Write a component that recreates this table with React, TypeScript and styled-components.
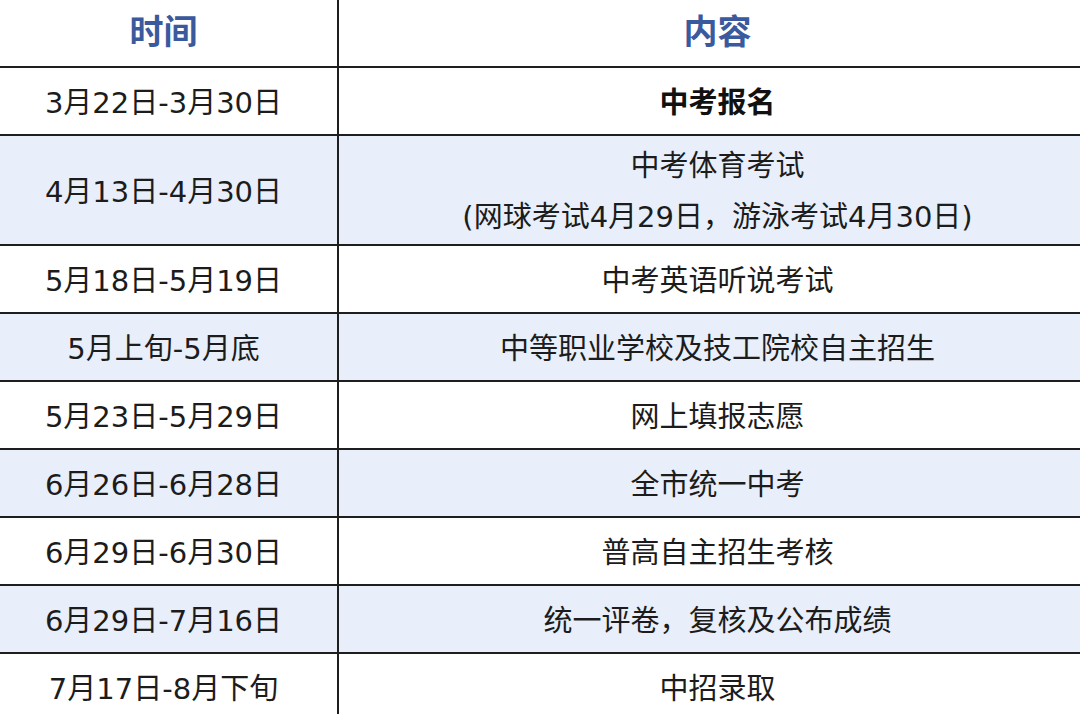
import styled, { createGlobalStyle } from "styled-components";

const GlobalStyle = createGlobalStyle`
    html, body {
        margin: 0;
        padding: 0;
        background: #ffffff;
        overflow: hidden;
    }
    body {
        font-family: "Noto Sans CJK SC", "Noto Sans", sans-serif;
        color: #1c1c1c;
    }
`

type Item = {
    time: string
    content: string[]
    bold?: boolean
}

const items: Item[] = [
    { time: "3月22日-3月30日", content: ["中考报名"], bold: true },
    { time: "4月13日-4月30日", content: ["中考体育考试", "(网球考试4月29日，游泳考试4月30日)"] },
    { time: "5月18日-5月19日", content: ["中考英语听说考试"] },
    { time: "5月上旬-5月底", content: ["中等职业学校及技工院校自主招生"] },
    { time: "5月23日-5月29日", content: ["网上填报志愿"] },
    { time: "6月26日-6月28日", content: ["全市统一中考"] },
    { time: "6月29日-6月30日", content: ["普高自主招生考核"] },
    { time: "6月29日-7月16日", content: ["统一评卷，复核及公布成绩"] },
    { time: "7月17日-8月下旬", content: ["中招录取"] },
]

export default function App() {
    return (
        <>
            <GlobalStyle />
            <Table>
                <Row height={66}>
                    <TimeCell><HeadText>时间</HeadText></TimeCell>
                    <ContentCell><HeadText>内容</HeadText></ContentCell>
                </Row>
                {items.map((item, i) => (
                    <Row
                        key={item.time}
                        height={item.content.length > 1 ? 108 : 66}
                        striped={i % 2 === 1}
                    >
                        <TimeCell><CellText>{item.time}</CellText></TimeCell>
                        <ContentCell>
                            {item.content.map(line => (
                                <CellText key={line} bold={item.bold} tall={item.content.length > 1}>
                                    {line}
                                </CellText>
                            ))}
                        </ContentCell>
                    </Row>
                ))}
            </Table>
        </>
    );
}

const Table = styled.div`
    width: 1106px;
    margin-left: -10px;
    display: flex;
    flex-direction: column;
`

type RowProps = {
    height: number
    striped?: boolean
}

const Row = styled.div<RowProps>`
    display: flex;
    height: ${props => props.height}px;
    border-bottom: 2px solid #1e1e1e;
    background: ${props => props.striped ? "#e8effb" : "#ffffff"};
    flex-shrink: 0;
`

const TimeCell = styled.div`
    width: 347px;
    border-right: 2px solid #1e1e1e;
    display: flex;
    flex-direction: column;
    align-items: center;
    justify-content: center;
    padding-top: 3px;
`

const ContentCell = styled.div`
    flex: 1;
    display: flex;
    flex-direction: column;
    align-items: center;
    justify-content: center;
    padding-top: 3px;
`

const HeadText = styled.span`
    font-size: 34px;
    font-weight: 700;
    color: #3a5a9d;
    margin-top: -10px;
`

type CellTextProps = {
    bold?: boolean
    tall?: boolean
}

const CellText = styled.span<CellTextProps>`
    font-family: "DejaVu Sans", "Noto Sans CJK SC", sans-serif;
    font-size: 29px;
    line-height: ${props => props.tall ? "51px" : "40px"};
    font-weight: ${props => props.bold ? 700 : 400};
    color: ${props => props.bold ? "#111111" : "#1c1c1c"};
    white-space: nowrap;
`
